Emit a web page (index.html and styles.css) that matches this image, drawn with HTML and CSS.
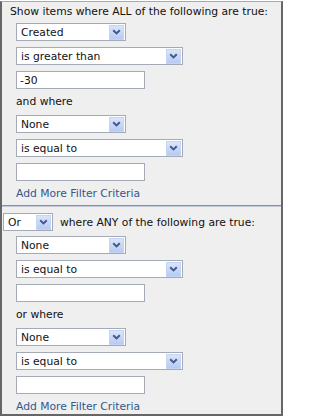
FILE: index.html
```html
<!DOCTYPE html>
<html>
<head>
<meta charset="utf-8">
<link rel="stylesheet" href="styles.css">
</head>
<body>
<div class="panel">
  <div class="section first">
    <div class="heading">Show items where ALL of the following are true:</div>
    <div class="controls">
      <div class="select short"><span class="val">Created</span><span class="btn"><svg width="9" height="6" viewBox="0 0 9 6"><path d="M1.2 1.2 L4.5 4.4 L7.8 1.2" fill="none" stroke="#44598a" stroke-width="2"/></svg></span></div>
      <div class="select long"><span class="val">is greater than</span><span class="btn"><svg width="9" height="6" viewBox="0 0 9 6"><path d="M1.2 1.2 L4.5 4.4 L7.8 1.2" fill="none" stroke="#44598a" stroke-width="2"/></svg></span></div>
      <div class="input">-30</div>
      <div class="label">and where</div>
      <div class="select short"><span class="val">None</span><span class="btn"><svg width="9" height="6" viewBox="0 0 9 6"><path d="M1.2 1.2 L4.5 4.4 L7.8 1.2" fill="none" stroke="#44598a" stroke-width="2"/></svg></span></div>
      <div class="select long"><span class="val">is equal to</span><span class="btn"><svg width="9" height="6" viewBox="0 0 9 6"><path d="M1.2 1.2 L4.5 4.4 L7.8 1.2" fill="none" stroke="#44598a" stroke-width="2"/></svg></span></div>
      <div class="input"></div>
      <a class="link" href="#">Add More Filter Criteria</a>
    </div>
  </div>
  <div class="separator"></div>
  <div class="section second">
    <div class="orrow">
      <div class="select tiny"><span class="val">Or</span><span class="btn"><svg width="9" height="6" viewBox="0 0 9 6"><path d="M1.2 1.2 L4.5 4.4 L7.8 1.2" fill="none" stroke="#44598a" stroke-width="2"/></svg></span></div>
      <span class="ortext">where ANY of the following are true:</span>
    </div>
    <div class="controls">
      <div class="select short"><span class="val">None</span><span class="btn"><svg width="9" height="6" viewBox="0 0 9 6"><path d="M1.2 1.2 L4.5 4.4 L7.8 1.2" fill="none" stroke="#44598a" stroke-width="2"/></svg></span></div>
      <div class="select long"><span class="val">is equal to</span><span class="btn"><svg width="9" height="6" viewBox="0 0 9 6"><path d="M1.2 1.2 L4.5 4.4 L7.8 1.2" fill="none" stroke="#44598a" stroke-width="2"/></svg></span></div>
      <div class="input"></div>
      <div class="label">or where</div>
      <div class="select short"><span class="val">None</span><span class="btn"><svg width="9" height="6" viewBox="0 0 9 6"><path d="M1.2 1.2 L4.5 4.4 L7.8 1.2" fill="none" stroke="#44598a" stroke-width="2"/></svg></span></div>
      <div class="select long"><span class="val">is equal to</span><span class="btn"><svg width="9" height="6" viewBox="0 0 9 6"><path d="M1.2 1.2 L4.5 4.4 L7.8 1.2" fill="none" stroke="#44598a" stroke-width="2"/></svg></span></div>
      <div class="input"></div>
      <a class="link" href="#">Add More Filter Criteria</a>
    </div>
  </div>
</div>
</body>
</html>
```
FILE: styles.css
```css
html, body {
  margin: 0;
  padding: 0;
  background: #ffffff;
}
body {
  font-family: "DejaVu Sans", Verdana, sans-serif;
  font-size: 10.75px;
  line-height: 13px;
  color: #111111;
}
.panel {
  box-sizing: border-box;
  width: 283px;
  height: 415px;
  margin-top: 1px;
  background: #efefef;
  border-top: 1px solid #a9a9a9;
  border-left: 2px solid #666666;
  border-right: 2px solid #666666;
  border-bottom: 2px solid #666666;
  display: flex;
  flex-direction: column;
}
.section.first {
  padding: 3px 0 0 8px;
}
.heading {
  height: 13px;
  white-space: nowrap;
}
.controls {
  display: flex;
  flex-direction: column;
  align-items: flex-start;
  gap: 6px;
  margin-left: 6px;
  margin-top: 5px;
}
.select {
  box-sizing: border-box;
  height: 18px;
  background: #ffffff;
  border: 1px solid #a4abb7;
  padding-right: 1px;
  display: flex;
  align-items: center;
  justify-content: space-between;
}
.select.short { width: 110px; }
.select.long { width: 167px; }
.select.tiny { width: 50px; }
.val {
  padding-left: 4px;
  white-space: nowrap;
}
.btn {
  box-sizing: border-box;
  width: 15px;
  height: 15px;
  background: linear-gradient(#dae5fc, #b8caf2);
  border: 1px solid #c6d4f3;
  display: flex;
  align-items: center;
  justify-content: center;
}
.btn svg { display: block; }
.input {
  box-sizing: border-box;
  width: 129px;
  height: 18px;
  background: #ffffff;
  border: 1px solid #a4abb7;
  padding-left: 3px;
  display: flex;
  align-items: center;
}
.label {
  height: 14px;
  line-height: 14px;
}
.link {
  color: #33578e;
  text-decoration: none;
  line-height: 13px;
  white-space: nowrap;
}
.separator {
  margin-top: 5px;
  height: 1px;
  background: #7f91ae;
  border-bottom: 1px solid #c3cbd9;
}
.section.second {
  padding: 6px 0 0 1px;
}
.section.second .controls {
  margin-left: 13px;
}
.orrow {
  display: flex;
  align-items: center;
  gap: 7px;
}
.ortext {
  white-space: nowrap;
}
```
